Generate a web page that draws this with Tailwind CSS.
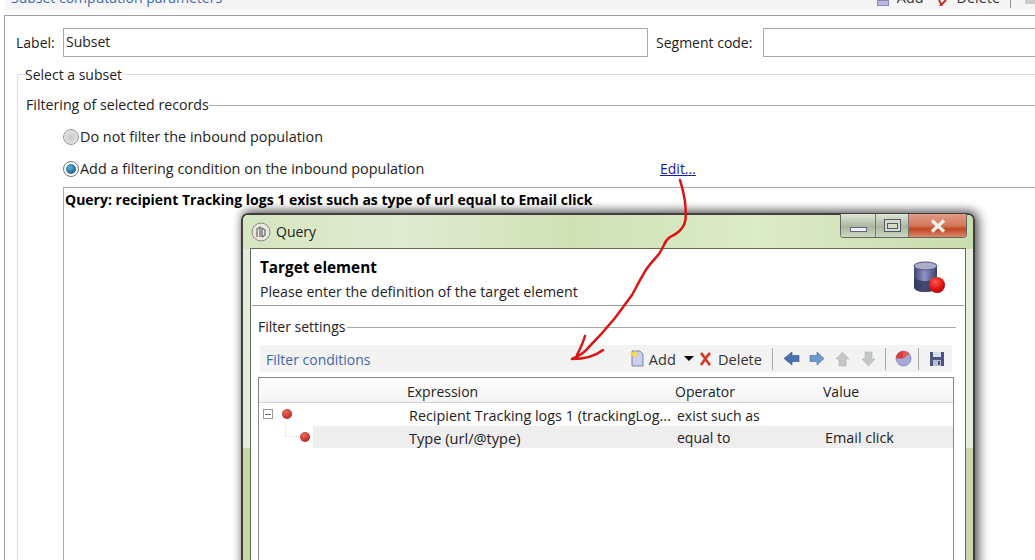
<!DOCTYPE html>
<html lang="en">
<head>
  <meta charset="UTF-8" />
  <title>Subset computation parameters</title>
  <script src="https://cdn.jsdelivr.net/npm/@tailwindcss/browser@4"></script>
</head>
<body class="bg-white">
  <div class="relative w-[1035px] h-[560px] overflow-hidden bg-white text-[14px] leading-[20px] text-[#222] font-['Open_Sans',sans-serif]">

    <!-- top bar, cut off by the screenshot -->
    <div class="h-[10px] ml-[5px] bg-[#f5f5f5] flex justify-between overflow-hidden">
      <span class="ml-[6px] -mt-[12px] text-[#3b6ab0]">Subset computation parameters</span>
      <div class="flex items-start -mt-[12px] text-[#333] text-[14.4px]">
        <span class="mt-[12px] w-[12px] h-[6px] bg-[#b8b8e0] border border-[#8888b8]"></span>
        <span class="ml-[8px]">Add</span>
        <svg class="ml-[12px] mt-[12px] w-[13px] h-[6px]" viewBox="0 0 13 6"><path d="M3 0l3 6M10 0L4 6" stroke="#c03030" stroke-width="2" fill="none"/></svg>
        <span class="ml-[8px]">Delete</span>
        <span class="ml-[10px] mt-[12px] w-px h-[8px] bg-[#999]"></span>
        <span class="ml-[14px] mt-[12px] w-[10px] h-[4px] bg-[#ccc]"></span>
      </div>
    </div>

    <!-- main panel -->
    <div class="ml-[4px] mt-[5px] h-[545px] border-t border-l border-[#a0a0a0]">
      <div class="flex items-center mt-[12px] ml-[11px] h-[29px]">
        <span class="w-[47px]">Label:</span>
        <div class="w-[585px] h-[29px] border border-[#aaa] pl-[2px] leading-[25px]">Subset</div>
        <span class="ml-[8px] w-[107px]">Segment code:</span>
        <div class="flex-1 h-[29px] border border-[#aaa] border-r-0"></div>
      </div>

      <div class="ml-[12px] mt-[17px] h-[600px] border-t border-l border-[#ddd] rounded-tl-[3px]">
        <div class="-mt-[7px] ml-[7px] w-fit bg-white pr-[2px] leading-[14px]">Select a subset</div>
        <div class="flex items-center mt-[13px] ml-[8px] h-[20px]">
          <span class="text-[14.2px]">Filtering of selected records</span>
          <span class="flex-1 h-px bg-[#aaa]"></span>
        </div>

        <div class="flex items-center mt-[12px] ml-[45px] h-[20px] text-[14.4px]">
          <span class="w-[16px] h-[16px] rounded-full border border-[#999] bg-[radial-gradient(circle,#c8c8c8,#eee)] shrink-0 mr-[1px]"></span>
          <span>Do not filter the inbound population</span>
        </div>
        <div class="flex items-center mt-[12px] ml-[45px] h-[20px] text-[14.4px]">
          <span class="w-[16px] h-[16px] rounded-full border border-[#777] bg-white flex items-center justify-center shrink-0 mr-[1px]">
            <span class="w-[10px] h-[10px] rounded-full bg-[radial-gradient(circle_at_40%_35%,#5cb4e0,#0a3c66)]"></span>
          </span>
          <span class="w-[580px]">Add a filtering condition on the inbound population</span>
          <a class="text-[#1a1ab0] underline text-[14px]">Edit...</a>
        </div>

        <div class="ml-[45px] mt-[8px] h-[500px] border-t border-l border-[#aaa] pl-[1px] pt-[2px] font-bold text-black">
          Query: recipient Tracking logs 1 exist such as type of url equal to Email click
        </div>
      </div>
    </div>

    <!-- Query window -->
    <div class="absolute left-[241px] top-[213px] w-[734px] h-[400px] rounded-t-[7px] border-2 border-[#3f3f3f] bg-[linear-gradient(180deg,#e6eedb_0,#e6eedb_233px,#c8d8a8_233px)] shadow-[4px_0_12px_rgba(0,0,0,0.55),0_-3px_8px_rgba(0,0,0,0.35)]">
      <!-- title -->
      <div class="flex items-center h-[34px] pl-[8px] rounded-t-[5px] bg-[linear-gradient(90deg,#d6e6c0_0%,#e0ebd0_22%,#cfe2b4_45%,#dcebc8_70%,#c9dcac_100%)]">
        <svg class="w-[20px] h-[20px]" viewBox="0 0 20 20"><circle cx="10" cy="10" r="9" fill="#e8e8e0" stroke="#8a8a80"/><path d="M6 15V7l3-2v10M11 15V6l3 2v5l-3 2" fill="none" stroke="#666" stroke-width="1.2"/></svg>
        <span class="ml-[5px] text-[#222]">Query</span>
      </div>
      <!-- caption buttons -->
      <div class="absolute right-[6px] -top-[1px] flex h-[24px] w-[127px] rounded-b-[4px] border border-t-0 border-[#666] overflow-hidden">
        <div class="w-[35px] border-r border-[#777] bg-[linear-gradient(180deg,#dfe6d6,#a9b7a0_55%,#ccd6c0)] flex items-end justify-center pb-[5px]">
          <span class="w-[17px] h-[5px] bg-[#eef] border border-[#667]"></span>
        </div>
        <div class="w-[33px] border-r border-[#777] bg-[linear-gradient(180deg,#dfe6d6,#a9b7a0_55%,#ccd6c0)] flex items-center justify-center">
          <span class="w-[17px] h-[13px] border border-[#556] bg-[#d5dccb] flex items-center justify-center"><span class="w-[11px] h-[6px] border border-[#556]"></span></span>
        </div>
        <div class="flex-1 bg-[linear-gradient(180deg,#e39a84,#d0785c_50%,#c24522_65%,#d98a6c)] flex items-center justify-center">
          <svg class="w-[16px] h-[14px]" viewBox="0 0 16 14"><path d="M2 1.500l12 11M14 1.500l-12 11" stroke="#f4f0ea" stroke-width="3.400"/></svg>
        </div>
      </div>

      <!-- inner panel -->
      <div class="-mt-px mx-[7px] h-[360px] border border-[#5f6f55] bg-white">
        <div class="relative h-[57px] pl-[8px] pt-[8px] border-b border-[#999] mx-[1px]">
          <div class="font-bold text-black leading-[20px] text-[15.3px]">Target element</div>
          <div class="mt-[5px] leading-[20px] text-[14.2px]">Please enter the definition of the target element</div>
          <!-- database icon -->
          <svg class="absolute right-[18px] top-[12px] w-[34px] h-[34px]" viewBox="0 0 34 34">
            <defs>
              <linearGradient id="db" x1="0" x2="1" y1="0" y2="0"><stop offset="0" stop-color="#3f4570"/><stop offset=".45" stop-color="#8f92c8"/><stop offset="1" stop-color="#3a3f68"/></linearGradient>
              <radialGradient id="ball" cx=".4" cy=".3" r=".8"><stop offset="0" stop-color="#ff5a4a"/><stop offset=".6" stop-color="#e01010"/><stop offset="1" stop-color="#900"/></radialGradient>
            </defs>
            <path d="M2 5v21c0 3 5 5 11 5s12-2 12-5V5z" fill="url(#db)"/>
            <path d="M2 16c2 3 6 4 11 4s10-1 12-4v10c0 3-6 5-12 5S2 29 2 26z" fill="#2e3358" opacity=".75"/>
            <ellipse cx="13.500" cy="5" rx="11.500" ry="4" fill="#a9adc9" stroke="#4d5278"/>
            <circle cx="25" cy="24" r="8" fill="url(#ball)"/>
          </svg>
        </div>

        <div class="flex items-center mt-[11px] ml-[7px] mr-[9px] h-[20px]">
          <span>Filter settings</span>
          <span class="flex-1 h-px bg-[#aaa] ml-[2px]"></span>
        </div>

        <!-- toolbar -->
        <div class="flex items-center mt-[8px] ml-[9px] mr-[13px] h-[27px] bg-[#f3f3f3] text-[#333] text-[14.6px]">
          <span class="ml-[6px] mt-[2px] text-[#3f67a8] text-[14px]">Filter conditions</span>
          <span class="flex-1"></span>
          <svg class="w-[15px] h-[17px]" viewBox="0 0 15 17"><path d="M2 1h8l3 3v12H2z" fill="#c9d0ec" stroke="#7c84b0"/><path d="M4.500 0l1 2.500 2.500-.5-1.500 2 1.500 2-2.500-.5-1 2.500-1-2.500L0 6l1.500-2L0 2l3.500.5z" fill="#f6d84a"/></svg>
          <span class="ml-[4px]">Add</span>
          <span class="ml-[8px] w-0 h-0 border-x-[5px] border-x-transparent border-t-[5px] border-t-black"></span>
          <svg class="ml-[5px] w-[13px] h-[14px]" viewBox="0 0 13 14"><path d="M2 1c3 3 5 8 9 12M11 1C8 4 5 9 2 13" stroke="#d03a2a" stroke-width="2.600" fill="none"/></svg>
          <span class="ml-[6px]">Delete</span>
          <span class="ml-[10px] w-px h-[22px] bg-[#aaa]"></span>
          <svg class="ml-[10px] w-[17px] h-[15px]" viewBox="0 0 17 15"><path d="M1 7.500L9 1v3.500h7v6H9V14z" fill="#4a72ae" stroke="#2e5188" stroke-width=".6"/></svg>
          <svg class="ml-[9px] w-[16px] h-[15px]" viewBox="0 0 16 15"><path d="M15 7.500L8 1v3.500H1v6h7V14z" fill="#6f98cc" stroke="#3e6aa2" stroke-width=".6"/></svg>
          <svg class="ml-[10px] w-[15px] h-[16px]" viewBox="0 0 15 16"><path d="M7.500 1L14 8h-3v7H4V8H1z" fill="#c4c8c6" stroke="#b0b4b2" stroke-width=".6"/></svg>
          <svg class="ml-[11px] w-[15px] h-[16px]" viewBox="0 0 15 16"><path d="M7.500 15L14 8h-3V1H4v7H1z" fill="#c4c8c6" stroke="#b0b4b2" stroke-width=".6"/></svg>
          <span class="ml-[9px] w-px h-[22px] bg-[#aaa]"></span>
          <svg class="ml-[9px] w-[17px] h-[17px]" viewBox="0 0 17 17"><circle cx="8.500" cy="8.500" r="7.500" fill="#a4a8dc" stroke="#6a6ea8" stroke-width=".6"/><path d="M8.500 8.500H1A7.500 7.500 0 0 1 8.500 1z" fill="#d83a3a"/><path d="M8.500 1a7.500 7.500 0 0 1 6 3L8.500 8.500z" fill="#e05a5a"/></svg>
          <span class="ml-[6px] w-px h-[22px] bg-[#aaa]"></span>
          <svg class="ml-[10px] w-[16px] h-[16px] mr-[7px]" viewBox="0 0 16 16"><path d="M1 1h14v14H1z" fill="#4c5580"/><path d="M4 1h8v5H4z" fill="#d8dcec"/><path d="M4 9h8v6H4z" fill="#b9bdd6"/><path d="M9 10h2v4H9z" fill="#4c5580"/></svg>
        </div>

        <!-- conditions table -->
        <div class="mt-[5px] ml-[7px] mr-[11px] h-[300px] border border-[#888]">
          <div class="flex h-[25px] pt-[3px] items-center bg-[linear-gradient(180deg,#fff,#f4f4f4)] border-b border-[#d5d5d5]">
            <span class="w-[148px]"></span>
            <span class="w-[268px]">Expression</span>
            <span class="w-[148px]">Operator</span>
            <span>Value</span>
          </div>
          <div class="relative flex h-[23px] pt-[3px] items-center">
            <span class="absolute left-[4px] top-[6px] w-[10px] h-[10px] border border-[#999] flex items-center justify-center"><span class="w-[6px] h-px bg-[#666]"></span></span>
            <span class="absolute left-[23px] top-[6px] w-[10px] h-[10px] rounded-full bg-[radial-gradient(circle_at_40%_30%,#ee6a5a,#a81010)]"></span>
            <span class="w-[150px]"></span>
            <span class="w-[268px] whitespace-nowrap text-[14.4px]">Recipient Tracking logs 1 (trackingLog...</span>
            <span>exist such as</span>
          </div>
          <div class="relative flex h-[22px] items-center">
            <span class="absolute left-[26px] -top-[4px] w-[16px] h-[15px] border-l border-b border-dotted border-[#ddd]"></span>
            <span class="absolute left-[41px] top-[6px] w-[10px] h-[10px] rounded-full bg-[radial-gradient(circle_at_40%_30%,#ee6a5a,#a81010)]"></span>
            <span class="w-[54px]"></span>
            <div class="flex flex-1 h-full pt-[2px] items-center bg-[#eee]">
              <span class="ml-[96px] w-[268px] text-[14.6px]">Type (url/@type)</span>
              <span class="w-[148px]">equal to</span>
              <span class="text-[14.4px]">Email click</span>
            </div>
          </div>
        </div>
      </div>
    </div>

    <!-- hand drawn arrow over everything -->
    <svg class="absolute left-0 top-0 pointer-events-none" width="1035" height="560" viewBox="0 0 1035 560">
      <path d="M680 180C683 190 685 198 685.500 207C686 218 686 223 682 228C678 234 673 235 670 237C666 240 665 242 664 245C662 249 661 251 659 254C652 262 646 268 643 275C638 283 636 288 632 295C626 303 621 310 615 318C606 329 597 339 588 348C585 352 581 355 572 359C582 359 594 357 603 350M585 336C583 343 580 349 577 355" fill="none" stroke="#dc1414" stroke-width="2.500" stroke-linecap="round" stroke-linejoin="round"/>
    </svg>
  </div>
</body>
</html>
